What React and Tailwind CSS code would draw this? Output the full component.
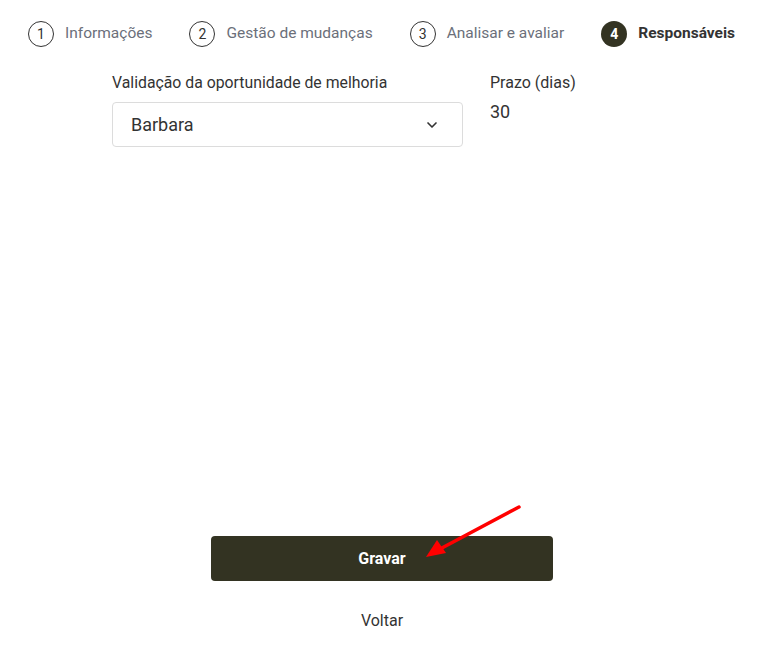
import { ChevronDown } from "lucide-react"

const steps = [
  { n: 1, label: "Informações" },
  { n: 2, label: "Gestão de mudanças" },
  { n: 3, label: "Analisar e avaliar" },
  { n: 4, label: "Responsáveis", active: true },
]

export default function App() {
  return (
    <div
      className="relative w-[774px] h-[652px] bg-white text-[#333333]"
      style={{ fontFamily: "Roboto, 'Noto Sans', sans-serif" }}
    >
      {/* stepper */}
      <div className="flex items-center gap-[37px] pl-[28px] pt-[21px]">
        {steps.map((s) => (
          <div key={s.n} className="flex items-center gap-[11px]">
            {s.active ? (
              <div className="w-[26px] h-[26px] rounded-full bg-[#333322] text-white text-[14px] font-bold flex items-center justify-center">
                {s.n}
              </div>
            ) : (
              <div className="w-[26px] h-[26px] rounded-full border border-[#333333] text-[#333333] text-[14px] flex items-center justify-center">
                {s.n}
              </div>
            )}
            <span
              className={
                s.active
                  ? "text-[15.5px] font-bold text-[#333333]"
                  : "text-[15.5px] text-[#6b6f7a]"
              }
            >
              {s.label}
            </span>
          </div>
        ))}
      </div>

      {/* form */}
      <div className="flex gap-[27px] pl-[112px] mt-[25px]">
        <div className="w-[351px]">
          <div className="text-[15.8px] leading-[22px] text-[#333333]">Validação da oportunidade de melhoria</div>
          <div className="mt-[8px] h-[45px] border border-[#dcdcdc] rounded-[4px] flex items-center justify-between pl-[18px] pr-[22px]">
            <span className="text-[18px] text-[#333333]">Barbara</span>
            <ChevronDown className="w-[16px] h-[16px] text-[#333333]" strokeWidth={2.5} />
          </div>
        </div>
        <div>
          <div className="text-[16px] leading-[22px] text-[#333333]">Prazo (dias)</div>
          <div className="mt-[4px] text-[18px] text-[#333333]">30</div>
        </div>
      </div>

      {/* actions */}
      <div className="mt-[389px] ml-[211px] w-[342px]">
        <button className="w-full h-[45px] rounded-[4px] bg-[#333322] text-white text-[16px] font-bold">
          Gravar
        </button>
        <div className="mt-[28px] text-center text-[16px] text-[#333333]">Voltar</div>
      </div>

      {/* annotation arrow */}
      <svg className="absolute left-0 top-0 pointer-events-none" width="774" height="652">
        <line x1="519" y1="507" x2="440" y2="549" stroke="#ff0000" strokeWidth="3.5" strokeLinecap="round" />
        <polygon points="426,557 437,540 446,553" fill="#ff0000" />
      </svg>
    </div>
  )
}
